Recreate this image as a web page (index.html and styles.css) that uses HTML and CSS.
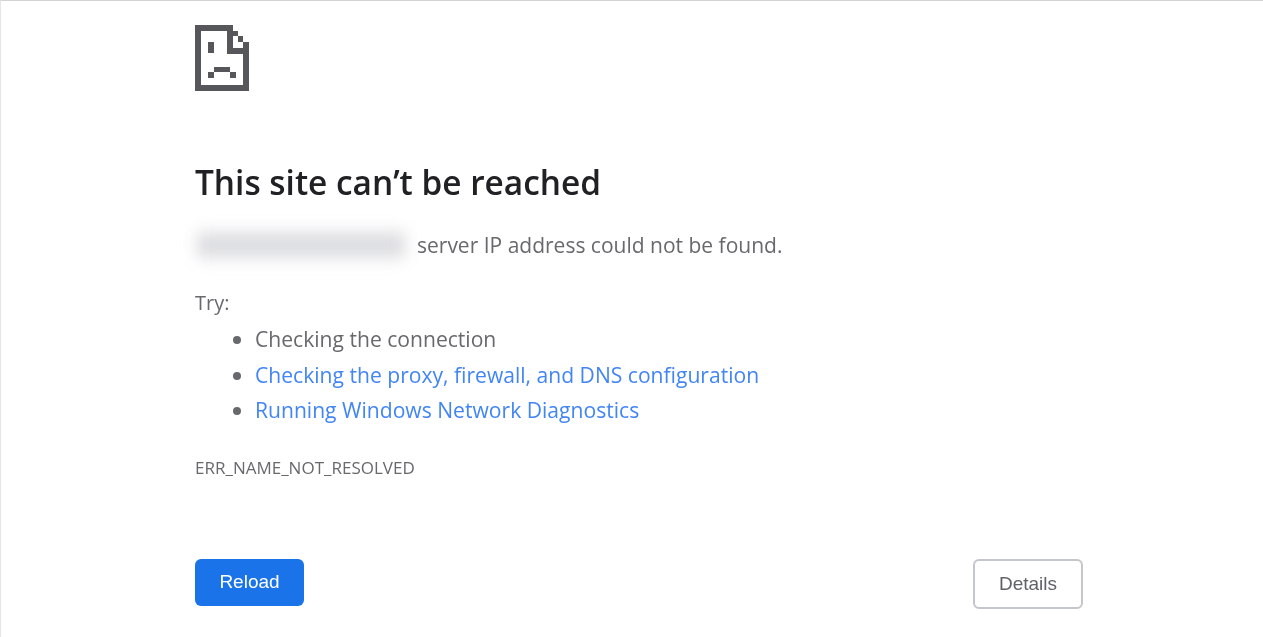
FILE: index.html
```html
<!DOCTYPE html>
<html lang="en">

<head>
  <meta charset="UTF-8" />
  <title>This site can't be reached</title>
  <link rel="stylesheet" href="styles.css">
</head>

<body>
  <div class="container">
    <svg class="sad-icon" width="54" height="66" viewBox="0 0 54 66" fill="#55575a">
      <rect x="0" y="0" width="38" height="6" />
      <rect x="0" y="0" width="6" height="66" />
      <rect x="0" y="60" width="54" height="6" />
      <rect x="48" y="17" width="6" height="49" />
      <rect x="32" y="0" width="6" height="28" />
      <rect x="32" y="23" width="22" height="6" />
      <rect x="38" y="6" width="5" height="5" />
      <rect x="43" y="11" width="5" height="6" />
      <rect x="13" y="17" width="6" height="11" />
      <rect x="19" y="42" width="16" height="5" />
      <rect x="13" y="47" width="6" height="6" />
      <rect x="35" y="47" width="6" height="6" />
    </svg>

    <h1>This site can’t be reached</h1>

    <p class="summary"><span class="redacted"><span class="smudge"></span></span>server IP address could not be found.</p>

    <p class="try">Try:</p>
    <ul class="suggestions">
      <li>Checking the connection</li>
      <li><a href="#">Checking the proxy, firewall, and DNS configuration</a></li>
      <li><a href="#">Running Windows Network Diagnostics</a></li>
    </ul>

    <div class="error-code">ERR_NAME_NOT_RESOLVED</div>

    <div class="buttons">
      <button class="reload">Reload</button>
      <button class="details">Details</button>
    </div>
  </div>
</body>

</html>
```

FILE: styles.css
```css
html,
body {
  height: 100%;
}

body {
  margin: 0;
  box-sizing: border-box;
  background: #fff;
  border-top: 1px solid #d4d4d4;
  border-left: 1px solid #e6e6e6;
  font-family: "Open Sans", "Noto Sans", sans-serif;
  color: #68696d;
  overflow: hidden;
}

.container {
  width: 888px;
  margin-left: 194px;
  padding-top: 24px;
  filter: blur(0.4px);
}

.sad-icon {
  display: block;
  filter: blur(0.5px);
}

h1 {
  margin: 69px 0 0;
  font-size: 33.4px;
  line-height: 44px;
  font-weight: 600;
  color: #202124;
}

.summary {
  margin: 21px 0 0;
  font-size: 21px;
  line-height: 40px;
  display: flex;
  align-items: center;
}

.redacted {
  width: 229px;
  height: 40px;
  margin-left: -9px;
  margin-right: 2px;
  display: flex;
  align-items: center;
  justify-content: center;
}

.smudge {
  width: 208px;
  height: 26px;
  background: #dcdde0;
  filter: blur(8px);
}

.try {
  margin: 20px 0 0;
  font-size: 20px;
  line-height: 36px;
}

.suggestions {
  margin: 0 0 1px;
  padding-left: 60px;
  font-size: 21.1px;
  line-height: 35.5px;
}

.suggestions a {
  color: #4285f4;
  text-decoration: none;
}

.error-code {
  margin-top: 28px;
  font-size: 17px;
  line-height: 24px;
}

.buttons {
  margin-top: 79px;
  display: flex;
  justify-content: space-between;
  align-items: flex-start;
}

button {
  font-family: "Liberation Sans", sans-serif;
  font-size: 19px;
  border-radius: 6px;
  height: 47px;
  cursor: pointer;
}

.reload {
  width: 109px;
  background: #1a73e8;
  border: none;
  color: #fff;
}

.details {
  width: 110px;
  height: 50px;
  background: #fff;
  border: 2px solid #c3c6ca;
  color: #5f6368;
}
```
